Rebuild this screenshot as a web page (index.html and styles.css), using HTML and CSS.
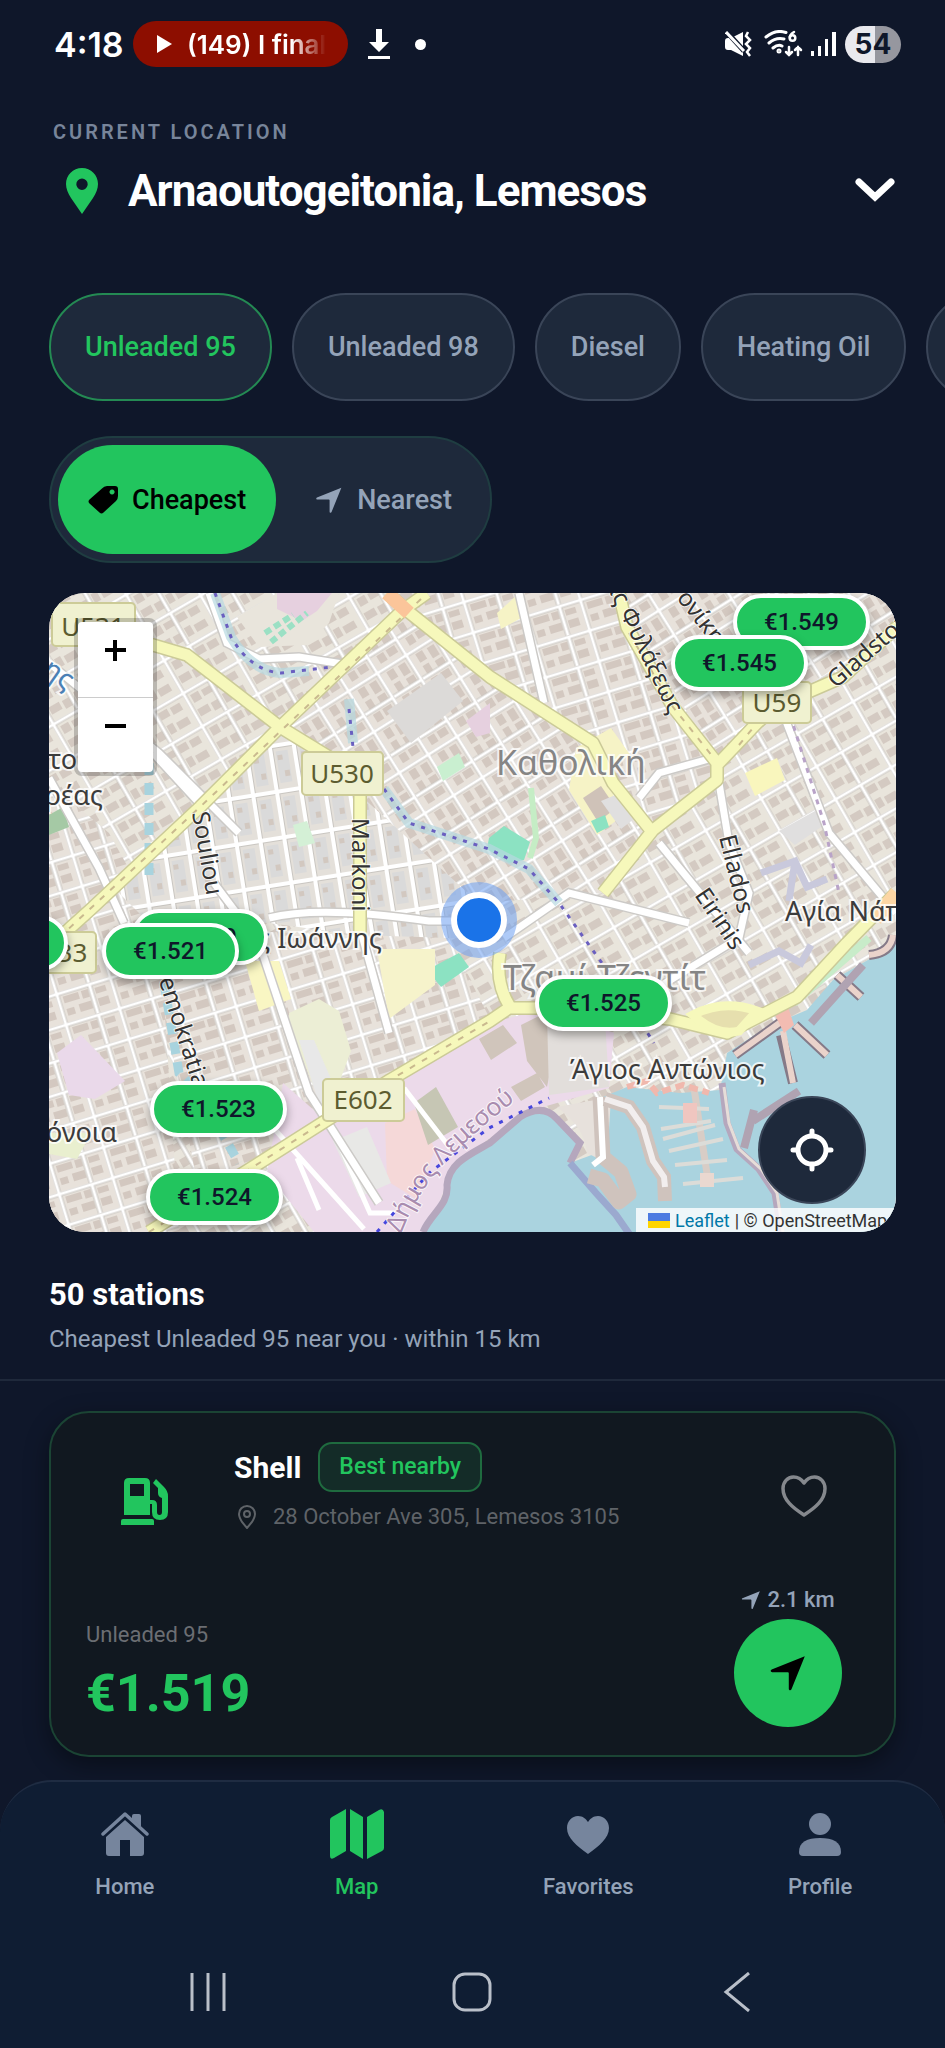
FILE: index.html
```html
<!DOCTYPE html>
<html lang="en">
<head>
<meta charset="utf-8">
<meta name="viewport" content="width=device-width, initial-scale=1">
<title>Fuel stations map</title>
<link rel="stylesheet" href="styles.css">
</head>
<body>
<svg class="defs" width="0" height="0" aria-hidden="true">
  <symbol id="nav-arrow" viewBox="0 0 24 24"><path d="M22.6 1.400 14.200 22.300c-.4 1-1.700.8-1.700-.3V12.200c0-.4-.3-.7-.7-.7H2c-1.100 0-1.300-1.300-.3-1.700Z" fill="currentColor"/></symbol>
</svg>

<div class="status">
  <div class="status-side">
    <span class="clock">4:18</span>
    <span class="media"><svg width="15" height="18" viewBox="0 0 15 18"><path d="M0 0 15 9 0 18Z" fill="#fff"/></svg><span class="media-text">(149) I final</span></span>
    <svg class="download" width="24" height="30" viewBox="0 0 24 30"><path d="M9 0h6v13h7L12 23 2 13h7ZM1 27h22v3H1Z" fill="#fff"/></svg>
    <span class="dot"></span>
  </div>
  <div class="status-side status-right">
    <svg width="27" height="26" viewBox="0 0 27 26" fill="none"><path d="M0 10q0-3 3-3h3l12-6v24L6 19H3q-3 0-3-3Z" fill="#fff"/><path d="M1 0 19 20" stroke="#0f172a" stroke-width="5"/><path d="m1 1 18 19" stroke="#fff" stroke-width="3"/><path d="m23 1-2 4 4 4-4 4 4 4-3 4 3 4" stroke="#fff" stroke-width="2.500"/></svg>
    <svg class="wifi" width="39" height="28" viewBox="0 0 39 28" fill="none" stroke="#fff" stroke-width="3" stroke-linecap="round"><path d="M2 7Q12-1 22 2.500M5 13q7-6 15-4M9 18q5-4 9-2"/><circle cx="15" cy="21" r="1" /><path d="M30 2q-5 3-4 6M25 17v8m-3-3 3 3 3-3M34 25v-8m-3 3 3-3 3 3" stroke-width="2.500"/><circle cx="28.500" cy="8" r="2.800" stroke-width="2.500"/></svg>
    <svg class="signal" width="25" height="26" viewBox="0 0 25 26"><path d="M0 20h3v5H0ZM7 15h3v10H7ZM14 8h3v17h-3ZM21 1h4v24h-4Z" fill="#fff"/></svg>
    <span class="battery">54</span>
  </div>
</div>

<header class="location">
  <p class="eyebrow">CURRENT LOCATION</p>
  <button class="place" type="button">
    <svg class="pin" width="32" height="46" viewBox="0 0 32 46"><path fill-rule="evenodd" d="M16 0C7 0 0 7 0 16c0 5 2 9 5 14l11 16 11-16c3-5 5-9 5-14C32 7 25 0 16 0Zm0 10.500a5.700 5.700 0 1 1 0 11.400 5.700 5.700 0 0 1 0-11.400Z" fill="#22c55e"/></svg>
    <span class="place-name">Arnaoutogeitonia, Lemesos</span>
    <svg width="40" height="26" viewBox="0 0 40 26" fill="none" stroke="#fff" stroke-width="7" stroke-linecap="round" stroke-linejoin="miter"><path d="M4 4 20 19 36 4"/></svg>
  </button>
</header>

<div class="fuels">
  <button class="chip chip-on" type="button">Unleaded 95</button>
  <button class="chip" type="button">Unleaded 98</button>
  <button class="chip" type="button">Diesel</button>
  <button class="chip" type="button">Heating Oil</button>
  <button class="chip" type="button">Kerosene</button>
</div>

<div class="sort">
  <button class="sort-item sort-on" type="button"><svg width="30" height="28" viewBox="0 0 30 28"><path fill-rule="evenodd" d="M14 2.500Q16 0 19 0h8q3 0 3 3v7q0 3-2 5L15.500 26.500q-2 2-4 0l-10-9q-2-2 0-4ZM24 3.500a2.500 2.500 0 1 0 .1 0Z" fill="#000"/></svg>Cheapest</button>
  <button class="sort-item" type="button"><svg width="28" height="28"><use href="#nav-arrow"/></svg>Nearest</button>
</div>

<section class="map" aria-label="Map">
  <svg class="tiles" viewBox="0 0 847 639" preserveAspectRatio="xMidYMid slice">
    <defs>
      <pattern id="blocks-a" width="64" height="38" patternUnits="userSpaceOnUse" patternTransform="rotate(-30)">
        <path d="M0 0h64v38H0Z" fill="#e9e5dc"/>
        <path d="M7 7h9v9H7Zm12 1h10v7H19Zm15-1h10v8H34Zm13 1h11v8H47ZM6 23h12v8H6Zm15 1h8v9h-8Zm14-2h7v10h-7Zm10 2h13v8H45Z" fill="#d4cac2"/>
        <path d="M0 2h64M2 0v38M31 2v36" stroke="#c9c6c1" stroke-width="5"/>
        <path d="M0 2h64M2 0v38M31 2v36" stroke="#fff" stroke-width="3"/>
      </pattern>
      <pattern id="blocks-b" width="24" height="46" patternUnits="userSpaceOnUse" patternTransform="rotate(-9)">
        <path d="M0 0h24v46H0Z" fill="#e4e0da"/><path d="M7 8h12v32H7Z" fill="#dadada"/><path d="M8 12h5v5H8Zm5 16h5v6h-5Z" fill="#d2c8c0"/>
        <path d="M0 2h24M2 0v46" stroke="#c9c6c1" stroke-width="6"/><path d="M0 2h24M2 0v46" stroke="#fff" stroke-width="4"/>
      </pattern>
      <pattern id="blocks-c" width="56" height="32" patternUnits="userSpaceOnUse" patternTransform="rotate(-17)">
        <path d="M0 0h56v32H0Z" fill="#e8e2db"/><path d="M7 6h16v7H7Zm19 0h7v8h-7Zm14 1h11v6H40ZM7 19h8v7H7Zm13-1h13v8H20Zm20 0h11v8H40Z" fill="#d3c8c0"/>
        <path d="M0 2h56M2 0v32M36 2v30" stroke="#c9c6c1" stroke-width="5"/><path d="M0 2h56M2 0v32M36 2v30" stroke="#fff" stroke-width="3"/>
      </pattern>
      <pattern id="blocks-d" width="48" height="34" patternUnits="userSpaceOnUse" patternTransform="rotate(58)">
        <path d="M0 0h48v34H0Z" fill="#e8e2db"/><path d="M7 7h12v8H7Zm15-1h8v9h-8Zm13 1h8v10h-8ZM6 20h10v8H6Zm14 1h9v7h-9Zm15-1h9v8h-9Z" fill="#d3c8c0"/>
        <path d="M0 2h48M2 0v34M31 2v32" stroke="#c9c6c1" stroke-width="5"/><path d="M0 2h48M2 0v34M31 2v32" stroke="#fff" stroke-width="3"/>
      </pattern>
      <path id="bay-text" d="M352 641Q366 604 392 574T476 500"/>
    </defs>

    <path d="M0 0h847v639H0Z" fill="url(#blocks-a)"/>
    <path d="M0 190 60 240 110 330 130 639H0Z" fill="url(#blocks-c)"/>
    <path d="M231 140 300 190 430 290 430 345 330 345 220 330 100 330 60 290Z" fill="url(#blocks-b)"/>
    <path d="M100 335 400 345 440 424 204 574 150 600Z" fill="url(#blocks-c)"/>
    <path d="M366 20 441 84 491 114 544 150 604 237 668 180 624 114 578 34 568 0H378Z" fill="url(#blocks-c)"/>
    <path d="M568 0 668 170 728 114 846 34V0Z" fill="url(#blocks-d)"/>
    <path d="M668 187 720 120 847 60V345L740 420 610 420 540 320Z" fill="url(#blocks-a)"/>
    <path d="M361 20 441 84 544 150 604 240 554 300 430 310 311 202 238 134Z" fill="url(#blocks-d)"/>

    <path d="M188 24 228 0h62l-10 30-22 22-48 2Z" fill="#e9e5dc"/>
    <path d="M228 0h55l-15 18-15 10-25-12Z" fill="#e6d0df"/>
    <path d="m216 40 28-18M222 49l36-29" fill="none" stroke="#9be0c4" stroke-width="6" stroke-dasharray="7 4"/>
    <path d="M0 222 14 214 20 234 0 242Z" fill="#a5c9a5"/>
    <path d="m338 118 54-38 22 28-52 42Z" fill="#dcdad8"/><path d="m417 128 24-18v30l-14 4Z" fill="#e6d0df"/>
    <path d="m388 174 22-14 6 14-22 14Z" fill="#c9efd0"/>
    <path d="m244 232 14-4 8 22-16 4Z" fill="#d4f0d6"/>
    <path d="m440 245 15-12 26 16-6 18-15 3-22-14Z" fill="#8ce2c2"/><path d="m482 195 5 50-6 20" fill="none" stroke="#c5edc5" stroke-width="6"/>
    <path d="m378 377 32-17 10 14-28 20Z" fill="#8ce2c2"/>
    <path d="M527 155l35-20 20 28-22 8 8 56-20 15-28-45Z" fill="#f6f3c6"/><path d="m534 205 18-12 15 22-18 14Z" fill="#cfc2b8"/><path d="m542 228 14-6 4 12-12 6Z" fill="#8ce2c2"/><path d="m552 208 24-10 14 24-18 14Z" fill="#e0dfdf"/>
    <path d="m448 20 18-16 8 20-22 12Z" fill="#f6f3c6"/>
    <path d="m696 180 32-15 8 22-30 16Z" fill="#f9f6bd"/><path d="m730 238 36-20 12 12-32 22Z" fill="#e0dfdf"/>
    <path d="M196 368h34l12 38-32 12Z" fill="#f9f6c3"/><path d="M328 356h58v36l-46 34Z" fill="#f6f3cb"/>
    <path d="m240 420 30-14 20 12 12 40-18 48-20-14-24-60Z" fill="#eceed5"/><path d="M250 447h15l28 64-20 10Z" fill="#e8e8e8"/>
    <path d="m8 460 24-18 44 46-30 18-26-4Z" fill="#ead9ea"/>
    <path d="M0 540h42l-14 26-28-5Z" fill="#e9efcf"/>
    <path d="M234 490 275 526 341 487 440 430 500 415 565 440 560 495 494 514 441 545 404 574 390 610 374 639H265L218 580Z" fill="#ecdaea"/>
    <path d="m336 530 30-14 20 40-18 50-30-18Z" fill="#f5d8d8"/><path d="m365 510 22-16 22 40-30 18Z" fill="#c6c6b4"/>
    <path d="m284 548 34-14 24 56-32 14Z" fill="#e8e8e6"/>
    <path d="m430 446 24-14 14 18-26 17Zm32 48 26-14 8 14-24 14Zm10-62 24-12 10 34-8 40-20-26Z" fill="#d0c5bb"/>
    <path d="m498 420 58 6 4 68-60 8Z" fill="#e2dedb"/>
    <path d="m220 530 95 106M281 530l40 90h25M355 495l46 60M248 565l22 52" fill="none" stroke="#fff" stroke-width="5"/>

    <path d="M374 639C382 620 400 612 398 592 400 570 420 562 441 550L471 524Q494 510 508 526L531 550 521 570 548 560 554 504 578 494 631 500 671 497 678 460 718 434 758 417 784 387 824 364 847 344V639Z" fill="#aad3df"/>
    <path d="M374 639C382 620 400 612 398 592 400 570 420 562 441 550L471 524Q494 510 508 526L531 550 521 570" fill="none" stroke="#b5a7bd" stroke-width="7"/>
    <path d="m521 570 26 30 20 22 14 20" fill="none" stroke="#9ba9cf" stroke-width="7"/>
    <path d="M508 514q28 20 30 46l20 10 4-66Z" fill="#e7e1dc"/>
    <path d="m551 504 3 60 18 15 8 22-10 8-16-22-14-4" fill="none" stroke="#cfc3bd" stroke-width="15" stroke-linejoin="round"/>
    <path d="m551 504 3 60-10 8" fill="none" stroke="#fff" stroke-width="6"/>
    <path d="m556 506 24 8 14 20 10 34 11 16 1 24" fill="none" stroke="#cfc3bd" stroke-width="14"/><path d="m556 506 24 8 14 20 10 34 11 16 1 10" fill="none" stroke="#f2eeee" stroke-width="6"/>
    <path d="m645 495 6 40 8 52" fill="none" stroke="#d8cdc6" stroke-width="7"/>
    <path d="m610 514 50 2m-48 20 50-8m-48 18 52-14m-46 26 54-12m-48 26 52-5m-44 24 60-6" stroke="#dcdcd8" stroke-width="4"/>
    <path d="M634 510h14v20h-14Z" fill="#f0c6c0"/><path d="M651 580h14v14h-14Z" fill="#ead8d0"/>
    <path d="m673 490 5 40 10 26 22 20 16 24 6 39" fill="none" stroke="#b5a7bd" stroke-width="7"/><path d="m675 494 5 36 10 26 22 20 16 24 6 39" fill="none" stroke="#e6ddd8" stroke-width="3"/>
    <path d="m744 490-12-48M686 462l50-36M746 432l32 30M788 382l24 22M820 362q22-2 24-20" fill="none" stroke="#857a88" stroke-width="10"/>
    <path d="m744 490-10-52M686 462l50-36M746 432l32 30M788 382l24 22M820 362q22-2 24-20" fill="none" stroke="#ead3cb" stroke-width="6"/>
    <path d="m704 528 46-30M695 555l10-38M762 430l52-58" fill="none" stroke="#b0a3b2" stroke-width="8"/>
    <path d="m725 420 14-6 6 18-10 8Z" fill="#f3bcb2"/>
    <path d="m578 494 20-6 10 12 26-8 26 8" fill="none" stroke="#f0b8ad" stroke-width="6" stroke-dasharray="9 5"/>

    <g fill="none" stroke="#cccac7" stroke-width="10">
      <path d="M160 0 178 50 210 66 250 64 300 72M0 70 110 160 190 240M0 185 50 275 75 330M104 160 150 210"/>
      <path d="M220 325Q270 312 380 328L450 328M470 0 495 110M590 205 610 180 660 166M670 190 680 250 700 300 690 345 600 400M610 250 700 360M847 320 780 240 730 110"/>
      <path d="M311 335 340 440M165 290 210 350 260 500 330 610M455 345 520 300 640 330"/>
    </g>
    <g fill="none" stroke="#fff" stroke-width="7">
      <path d="M160 0 178 50 210 66 250 64 300 72M0 70 110 160 190 240M0 185 50 275 75 330M104 160 150 210"/>
      <path d="M220 325Q270 312 380 328L450 328M470 0 495 110M590 205 610 180 660 166M670 190 680 250 700 300 690 345 600 400M610 250 700 360M847 320 780 240 730 110"/>
      <path d="M311 335 340 440M165 290 210 350 260 500 330 610M455 345 520 300 640 330"/>
    </g>
    <path d="M100 170v120M115 390 130 480 150 500 190 570" fill="none" stroke="#a8d3de" stroke-width="9" stroke-dasharray="12 8"/>
    <path d="M166 0 182 44Q202 78 232 80L260 78M300 106 304 150M335 196 360 230 440 256 480 276 510 310" fill="none" stroke="#b7d9df" stroke-width="10" stroke-opacity=".7"/>
    <path d="M166 0 182 44Q202 78 232 80L282 74M300 116 304 154M335 196 360 230 440 256 480 276 510 310 560 380 605 450" fill="none" stroke="#6a5fc0" stroke-width="3" stroke-dasharray="4 7"/>
    <path d="M738 112 775 230 790 300" fill="none" stroke="#b9a3c8" stroke-width="3" stroke-dasharray="5 6"/>
    <path d="m712 280 34-12 12 26 20-8M746 268l-6 40M700 372l30-14 22 12 10-18" fill="none" stroke="#c9c9dc" stroke-width="7"/>
    <path d="M745 410 820 345" fill="none" stroke="#c8ecc9" stroke-width="8"/>
    <path d="M328 639 380 580 440 535 500 505" fill="none" stroke="#4646dc" stroke-width="3" stroke-dasharray="4 7"/>

    <g fill="none" stroke="#cbca98" stroke-width="14" stroke-linejoin="round">
      <path d="M50 50 104 52 138 62 164 82 231 134 293 172M311 190V342M378 0 354 17 231 134 151 214 41 317 0 354M338 0 361 20 441 84 544 150 564 190 604 240"/>
      <path d="M570 0 578 34 624 114 668 170V187L604 237 554 300M668 172 708 130 728 112 764 97 794 84 850 32M100 639 204 574 341 487 441 428 460 415 500 415 621 426 678 440 748 404 798 350 847 300M461 414Q446 390 451 360"/>
    </g>
    <g fill="none" stroke="#f6f8bb" stroke-width="11" stroke-linejoin="round">
      <path d="M50 50 104 52 138 62 164 82 231 134 293 172M311 190V342M378 0 354 17 231 134 151 214 41 317 0 354M338 0 361 20 441 84 544 150 564 190 604 240"/>
      <path d="M570 0 578 34 624 114 668 170V187L604 237 554 300M668 172 708 130 728 112 764 97 794 84 850 32M100 639 204 574 341 487 441 428 460 415 500 415 621 426 678 440 748 404 798 350 847 300M461 414Q446 390 451 360"/>
    </g>
    <path d="M372 6 151 214 0 354M580 40 624 114 664 164M100 639 204 574 341 487 441 428M690 152 708 130" fill="none" stroke="#c9b98e" stroke-width="2" stroke-dasharray="6 8"/>
    <path d="M338 0 360 20" stroke="#fbc59a" stroke-width="14"/><path d="m826 326 22-26" stroke="#fcd6a4" stroke-width="15"/>
    <path d="M644 422Q674 406 708 418L690 438Q668 444 644 422Z" fill="#e6dfae" stroke="#f6f8bb" stroke-width="9"/>

    <g class="shield"><rect x="3" y="10" width="83" height="43" rx="4"/><rect x="253" y="159" width="81" height="43" rx="4"/><rect x="694" y="89" width="68" height="41" rx="4"/><rect x="274" y="486" width="81" height="42" rx="4"/><rect x="-30" y="339" width="77" height="41" rx="4"/></g>
    <g class="shield-text"><text x="44" y="43">U531</text><text x="293" y="190">U530</text><text x="728" y="119">U59</text><text x="314" y="516">E602</text><text x="15" y="369">B33</text></g>
    <g class="area"><text x="447" y="182" font-size="34">Καθολική</text><text x="454" y="397" font-size="34">Τζαμί Τζεντίτ</text></g>
    <g class="town"><text x="521" y="486">Άγιος Αντώνιος</text><text x="736" y="328">Αγία Νάπα</text><text x="333" y="355" text-anchor="end">Άγιος Ιωάννης</text><text x="28" y="176" text-anchor="end">Απόστολος το</text><text x="54" y="212" text-anchor="end">Ανδρέας</text><text x="68" y="549" text-anchor="end">Ομόνοια</text></g>
    <g class="street">
      <text transform="translate(143 220)rotate(80)">Souliou</text>
      <text transform="translate(303 225)rotate(90)">Markoni</text>
      <text transform="translate(670 244)rotate(76)">Ellados</text>
      <text transform="translate(645 302)rotate(56)">Eirinis</text>
      <text transform="translate(787 96)rotate(-41)">Gladstonos</text>
      <text transform="translate(556 -10)rotate(64)">ας Φυλάξεως</text>
      <text transform="translate(627 5)rotate(52)">ονίκης</text>
      <text transform="translate(104 370)rotate(72)">Demokratias</text>
    </g>
    <text class="river" transform="translate(-8 80)rotate(35)">ης</text>
    <text class="district"><textPath href="#bay-text">Δήμος Λεμεσού</textPath></text>
  </svg>

  <button class="price p-left" type="button">€1.519</button>
  <button class="price p-519" type="button">€1.519</button>
  <button class="price p-521" type="button">€1.521</button>
  <button class="price p-523" type="button">€1.523</button>
  <button class="price p-524" type="button">€1.524</button>
  <button class="price p-525" type="button">€1.525</button>
  <button class="price p-549" type="button">€1.549</button>
  <button class="price p-545" type="button">€1.545</button>
  <span class="me"></span>

  <div class="zoom">
    <button type="button" aria-label="Zoom in"><svg width="21" height="21" viewBox="0 0 21 21"><path d="M8 0h4v8h9v4h-9v9H8v-9H0V8h8Z"/></svg></button>
    <button type="button" aria-label="Zoom out"><svg width="21" height="21" viewBox="0 0 21 21"><path d="M0 8h21v4H0Z"/></svg></button>
  </div>
  <button class="locate" type="button" aria-label="Centre on my location"><svg width="44" height="44" viewBox="0 0 44 44" fill="none" stroke="#fff" stroke-width="5" stroke-linecap="round"><circle cx="22" cy="22" r="14"/><path d="M22 3v4M22 37v4M3 22h4M37 22h4"/></svg></button>
  <div class="credit"><svg width="22" height="15" viewBox="0 0 22 15"><path d="M0 0h22v8H0Z" fill="#4c7be1"/><path d="M0 8h22v7H0Z" fill="#ffd500"/></svg><a href="#leaflet">Leaflet</a><span>| © OpenStreetMap</span></div>
</section>

<section class="summary">
  <h2>50 stations</h2>
  <p>Cheapest Unleaded 95 near you · within 15 km</p>
</section>

<main class="list">
  <article class="card">
    <div class="card-top">
      <svg class="pump" width="48" height="48" viewBox="0 0 48 48"><path fill-rule="evenodd" d="M3 6q0-5 5-5h16q5 0 5 5v17h2q5 0 5 5v7q0 3 2.500 3t2.500-3V21q-4-1-4-5v-5l-5-5 3-4 8 8q4 4 4 9v16q0 8-8 8t-8-8v-8h-2v11H3Zm6 1v12h14V7Z" fill="#22c55e"/><path d="M0 44q0-2 2-2h29q2 0 2 2v4H0Z" fill="#22c55e"/></svg>
      <div class="info">
        <div class="name-row"><h3>Shell</h3><span class="badge">Best nearby</span></div>
        <p class="address"><svg width="18" height="24" viewBox="0 0 18 24" fill="none" stroke="currentColor" stroke-width="2"><path d="M9 1C4.500 1 1 4.500 1 9c0 3 1.500 5.500 3 8l5 6 5-6c1.500-2.500 3-5 3-8 0-4.500-3.500-8-8-8Z"/><circle cx="9" cy="9" r="3"/></svg>28 October Ave 305, Lemesos 3105</p>
      </div>
      <button class="like" type="button" aria-label="Add to favorites"><svg width="46" height="42" viewBox="0 0 46 42" fill="none" stroke="#85888d" stroke-width="3.500" stroke-linejoin="round"><path d="M23 8C19 2 15 2 12.500 2 6.500 2 2 7 2 13.500 2 25 12 33 23 40 34 33 44 25 44 13.500 44 7 39.500 2 33.500 2 31 2 27 2 23 8Z"/></svg></button>
    </div>
    <div class="card-bottom">
      <div><p class="fuel">Unleaded 95</p><p class="amount">€1.519</p></div>
      <div class="route">
        <span class="distance"><svg width="20" height="20"><use href="#nav-arrow"/></svg>2.1 km</span>
        <button class="go" type="button" aria-label="Navigate"><svg width="38" height="38"><use href="#nav-arrow"/></svg></button>
      </div>
    </div>
  </article>
</main>

<nav class="tabs">
  <a href="#home"><svg width="48" height="52" viewBox="0 0 48 52"><path d="M24 12 43 29v16q0 3-3 3H29V32H19v16H8q-3 0-3-3V29Z" fill="currentColor"/><path d="M2 26 24 6 46 26" fill="none" stroke="currentColor" stroke-width="3.500" stroke-linecap="round" stroke-linejoin="round"/><path d="M31 8q0-2 2-2h5q2 0 2 2v11l-9-8Z" fill="currentColor"/></svg>Home</a>
  <a href="#map" class="tab-on"><svg width="54" height="52" viewBox="0 0 54 52"><path d="M0 12q0-2 2-3L16 1v42L4 50q-4 2-4-2ZM20 1l13 8v42l-13-8ZM37 9 49 2q4-2 5 2v36q0 2-2 3l-15 8Z" fill="currentColor"/></svg>Map</a>
  <a href="#favorites"><svg width="42" height="52" viewBox="0 0 42 52"><path d="M21 46C10 38 0 30 0 20 0 13 5 8 11 8c5 0 8 3 10 6 2-3 5-6 10-6 6 0 11 5 11 12 0 10-10 18-21 26Z" fill="currentColor"/></svg>Favorites</a>
  <a href="#profile"><svg width="42" height="52" viewBox="0 0 42 52"><circle cx="21" cy="16" r="11" fill="currentColor"/><path d="M0 44C0 34 8 30 21 30s21 4 21 14q0 4-4 4H4q-4 0-4-4Z" fill="currentColor"/></svg>Profile</a>
</nav>
<div class="system">
  <button type="button" aria-label="Recent apps"><svg width="40" height="40" viewBox="0 0 40 40" stroke="#b9bfc9" stroke-width="3"><path d="M4 1v38M20 1v38M36 1v38"/></svg></button>
  <button type="button" aria-label="Home screen"><svg width="40" height="40" viewBox="0 0 40 40" fill="none" stroke="#b9bfc9" stroke-width="3"><rect x="2" y="2" width="36" height="36" rx="11"/></svg></button>
  <button type="button" aria-label="Back"><svg width="40" height="40" viewBox="0 0 40 40" fill="none" stroke="#b9bfc9" stroke-width="3"><path d="M32 1 9 20l23 19"/></svg></button>
</div>
</body>
</html>
```

FILE: styles.css
```css
* { box-sizing: border-box; }
body {
  margin: 0;
  min-height: 100vh;
  display: flex;
  flex-direction: column;
  background: #0f172a;
  color: #fff;
  font-family: Roboto, "Noto Sans", sans-serif;
  overflow-x: hidden;
}
h2, h3, p { margin: 0; }
button { font: inherit; color: inherit; border: 0; padding: 0; background: none; }
svg { flex: none; }
.defs { position: absolute; }

.status {
  display: flex;
  justify-content: space-between;
  padding: 21px 44px 0 54px;
  height: 67px;
  font-family: Inter, sans-serif;
}
.status-side { display: flex; align-items: center; }
.clock { font-size: 34px; font-weight: 600; width: 79px; }
.media {
  display: flex;
  align-items: center;
  gap: 15px;
  width: 215px;
  height: 46px;
  padding: 0 20px 0 24px;
  border-radius: 23px;
  background: #8d0e00;
}
.media-text {
  overflow: hidden;
  white-space: nowrap;
  font-size: 26px;
  font-weight: 600;
  -webkit-mask-image: linear-gradient(90deg, #000 75%, transparent);
  mask-image: linear-gradient(90deg, #000 75%, transparent);
}
.download { margin-left: 19px; }
.dot { width: 11px; height: 11px; margin-left: 24px; border-radius: 50%; background: #fff; }
.wifi { margin-left: 12px; }
.signal { margin: 0 9px 0 8px; }
.battery {
  width: 56px;
  height: 37px;
  border-radius: 19px;
  background: linear-gradient(90deg, #e9e9ee 54%, #96979f 54%);
  color: #0f172a;
  font-size: 28px;
  font-weight: 700;
  line-height: 37px;
  text-align: center;
}

.location { padding: 53px 50px 0 53px; }
.eyebrow { color: #78859a; font-size: 20px; font-weight: 600; line-height: 24px; letter-spacing: 3px; }
.place { display: flex; align-items: center; width: 100%; margin-top: 20px; padding: 0 0 0 13px; text-align: left; }
.place-name { flex: 1; margin-left: 30px; font-size: 44px; font-weight: 700; line-height: 54px; letter-spacing: -1px; }

.fuels { display: flex; gap: 20px; margin-top: 75px; padding-left: 49px; overflow: hidden; }
.chip {
  flex: none;
  height: 108px;
  padding: 0 34px;
  border: 2px solid #3a4558;
  border-radius: 54px;
  background: #1e293b;
  color: #94a3b8;
  font-size: 27px;
  font-weight: 500;
}
.chip-on { border-color: #248a53; color: #22c55e; }

.sort {
  display: flex;
  align-self: flex-start;
  margin: 35px 49px 0;
  padding: 7px;
  border: 2px solid #1f3d41;
  border-radius: 64px;
  background: #1e293b;
}
.sort-item {
  display: flex;
  align-items: center;
  gap: 14px;
  height: 109px;
  padding: 0 30px;
  border-radius: 55px;
  color: #94a3b8;
  font-size: 27px;
  font-weight: 500;
}
.sort-item:last-child { padding: 0 31px 0 39px; }
.sort-item.sort-on { background: #22c55e; color: #000; }

.map { position: relative; height: 639px; margin: 30px 49px 0; border-radius: 36px; overflow: hidden; background: #e9e5dc; }
.tiles { display: block; width: 100%; height: 100%; }
.shield rect { fill: #f0f1d0; stroke: #cccb97; stroke-width: 2; }
.shield-text { font: 26px "Noto Sans", sans-serif; fill: #5c5c30; text-anchor: middle; }
.area, .town, .street, .river, .district { font-family: "Noto Sans", sans-serif; paint-order: stroke; stroke: #ffffffc0; stroke-width: 4px; }
.area { fill: #858585; }
.town { font-size: 27px; fill: #3c3c3c; }
.street { font-size: 24px; fill: #333; stroke-width: 2px; }
.river { font-size: 28px; fill: #4b80b5; }
.district { font-size: 25px; fill: #a98caf; stroke-width: 2px; }

.price {
  position: absolute;
  width: 137px;
  height: 56px;
  border: 4px solid #fff;
  border-radius: 28px;
  background: #22c55e;
  color: #0f172a;
  font-size: 24px;
  font-weight: 500;
  box-shadow: 0 4px 10px #00000059;
}
.p-left { left: -118px; top: 322px; }
.p-519 { left: 82px; top: 316px; }
.p-521 { left: 53px; top: 330px; }
.p-523 { left: 101px; top: 488px; }
.p-524 { left: 97px; top: 576px; }
.p-525 { left: 486px; top: 382px; }
.p-549 { left: 684px; top: 1px; }
.p-545 { left: 622px; top: 42px; }
.me {
  position: absolute;
  left: 402px;
  top: 299px;
  width: 56px;
  height: 56px;
  border: 6px solid #fff;
  border-radius: 50%;
  background: #1a73e8;
  box-shadow: 0 0 0 10px #6b9ff08c;
}
.zoom { position: absolute; left: 25px; top: 25px; border: 4px solid #0003; border-radius: 8px; background: #fff; background-clip: padding-box; }
.zoom button { display: flex; justify-content: center; width: 75px; height: 75px; padding-top: 18px; }
.zoom button + button { border-top: 1px solid #ccc; }
.locate {
  position: absolute;
  right: 30px;
  bottom: 28px;
  display: grid;
  place-items: center;
  width: 108px;
  height: 108px;
  border: 2px solid #3a4558;
  border-radius: 50%;
  background: #1e293b;
}
.credit {
  position: absolute;
  right: 0;
  bottom: 0;
  display: flex;
  align-items: center;
  gap: 5px;
  width: 260px;
  height: 24px;
  padding-left: 12px;
  background: #ffffffcc;
  color: #333;
  font-size: 18px;
  white-space: nowrap;
}
.credit a { color: #0078a8; text-decoration: none; }

.summary { padding: 43px 49px 24px; border-bottom: 2px solid #1f293b; }
.summary h2 { font-size: 31px; font-weight: 700; line-height: 40px; }
.summary p { margin-top: 8px; color: #94a3b8; font-size: 24px; line-height: 32px; }

.list { flex: 1; padding: 30px 49px 0; }
.card { padding: 29px 34px 28px 35px; border: 2px solid #1b4434; border-radius: 40px; background: #111820; box-shadow: 0 8px 24px #0006; }
.card-top { display: flex; }
.pump { margin: 35px 0 0 35px; }
.info { flex: 1; margin-left: 65px; }
.name-row { display: flex; align-items: center; gap: 17px; }
h3 { font-size: 30px; font-weight: 700; }
.badge { height: 50px; padding: 0 19px; border: 2px solid #1f6b3f; border-radius: 14px; background: #142c28; color: #22c55e; font-size: 23px; font-weight: 500; line-height: 46px; }
.address { display: flex; align-items: center; gap: 17px; margin-top: 10px; padding-left: 4px; color: #5f6368; font-size: 22px; line-height: 30px; }
.like { align-self: flex-start; margin: 33px 33px 0 0; }
.like svg { display: block; }
.card-bottom { display: flex; justify-content: space-between; align-items: flex-end; margin-top: 53px; }
.fuel { color: #6b6e73; font-size: 22px; line-height: 30px; }
.amount { color: #22c55e; font-size: 52px; font-weight: 700; line-height: 64px; margin: 12px 0 1px; }
.route { display: flex; flex-direction: column; align-items: center; gap: 4px; margin-right: 18px; }
.distance { display: flex; align-items: center; gap: 6px; color: #94a3b8; font-size: 22px; font-weight: 500; line-height: 30px; }
.go { display: grid; place-items: center; width: 108px; height: 108px; border-radius: 50%; background: #22c55e; color: #000; }

.tabs {
  display: grid;
  grid-template-columns: repeat(4, 1fr);
  height: 149px;
  padding: 26px 9px 0;
  border-top: 2px solid #1f2c42;
  border-radius: 52px 52px 0 0;
  background: #0f1d33;
}
.tabs a { display: flex; flex-direction: column; align-items: center; gap: 12px; color: #94a3b8; font-size: 22px; font-weight: 500; line-height: 30px; text-decoration: none; }
.tabs svg { color: #76859d; }
.tabs .tab-on, .tabs .tab-on svg { color: #22c55e; }
.system { display: grid; grid-template-columns: repeat(3, 1fr); height: 119px; padding: 0 76px; background: #0f1d33; }
.system button { display: grid; place-items: center; padding-top: 6px; }
```
